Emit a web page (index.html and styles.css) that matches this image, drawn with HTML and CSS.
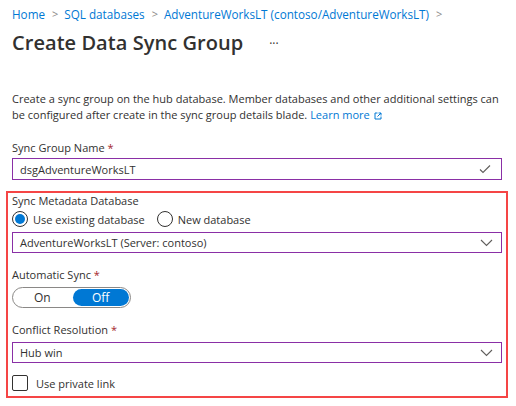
FILE: index.html
```html
<!DOCTYPE html>
<html>
<head>
<meta charset="utf-8">
<link rel="stylesheet" href="styles.css">
</head>
<body>
<div class="page">
  <nav class="crumbs">
    <a>Home</a><span class="sep">&gt;</span><a>SQL databases</a><span class="sep">&gt;</span><a>AdventureWorksLT (contoso/AdventureWorksLT)</a><span class="sep">&gt;</span>
  </nav>
  <div class="title-row">
    <h1>Create Data Sync Group</h1>
    <span class="more">···</span>
  </div>
  <p class="desc">
    <span class="line">Create a sync group on the hub database. Member databases and other additional settings can</span>
    <span class="line">be configured after create in the sync group details blade. <a class="link">Learn more <svg class="ext" width="8" height="8" viewBox="0 0 8 8"><path d="M3.5 1H1v6h6V4.5M4.5 1H7v2.5M7 1L3.5 4.5" fill="none" stroke="#0078d4" stroke-width="1"/></svg></a></span>
  </p>

  <div class="field">
    <div class="label">Sync Group Name <span class="req">*</span></div>
    <div class="input">
      <span>dsgAdventureWorksLT</span>
      <svg width="12" height="10" viewBox="0 0 12 10"><path d="M1 5.5l3 3 7-7" fill="none" stroke="#605e5c" stroke-width="1.1"/></svg>
    </div>
  </div>

  <section class="highlight">
    <div class="label">Sync Metadata Database</div>
    <div class="radios">
      <label class="radio"><span class="circle on"></span>Use existing database</label>
      <label class="radio"><span class="circle"></span>New database</label>
    </div>
    <div class="input dropdown">
      <span>AdventureWorksLT (Server: contoso)</span>
      <svg width="13" height="8" viewBox="0 0 13 8"><path d="M1 1l5.5 5.5L12 1" fill="none" stroke="#605e5c" stroke-width="1.1"/></svg>
    </div>

    <div class="label gap">Automatic Sync <span class="req">*</span></div>
    <div class="toggle">
      <span class="opt">On</span>
      <span class="opt active">Off</span>
    </div>

    <div class="label gap2">Conflict Resolution <span class="req">*</span></div>
    <div class="input dropdown">
      <span>Hub win</span>
      <svg width="13" height="8" viewBox="0 0 13 8"><path d="M1 1l5.5 5.5L12 1" fill="none" stroke="#605e5c" stroke-width="1.1"/></svg>
    </div>

    <label class="check"><span class="box"></span>Use private link</label>
  </section>
</div>
</body>
</html>
```

FILE: styles.css
```css
* { box-sizing: border-box; }
html, body { margin: 0; padding: 0; background: #fff; }
body {
  font-family: "Segoe UI", "Open Sans", "Noto Sans", sans-serif;
  font-size: 11px;
  color: #323130;
}
.page {
  width: 502px;
  padding: 6px 0 0 12px;
}
.crumbs {
  height: 16px;
  line-height: 16px;
  display: flex;
  align-items: center;
  white-space: nowrap;
  font-size: 11.7px;
}
.crumbs a { color: #0078d4; }
.crumbs .sep {
  color: #8a8886;
  margin: 0 6px 0 7px;
  font-size: 11px;
}
.title-row {
  display: flex;
  align-items: center;
  height: 30px;
  margin-top: 5px;
}
h1 {
  margin: 0;
  font-size: 20px;
  font-weight: 600;
  color: #323130;
  letter-spacing: 0.05px;
}
.more {
  margin-left: 26px;
  font-size: 12px;
  color: #323130;
  margin-top: 2px;
}
.desc {
  margin: 34px 0 0 0;
  line-height: 16px;
}
.desc .line { display: block; white-space: nowrap; }
.link { color: #0078d4; }
.ext { vertical-align: -1px; margin-left: 1px; }
.field { margin-top: 17px; }
.label {
  line-height: 16px;
  height: 16px;
}
.req { color: #a4262c; }
.input {
  margin-top: 2px;
  width: 490px;
  height: 22px;
  border: 1px solid #8a2fa6;
  display: flex;
  align-items: center;
  justify-content: space-between;
  padding: 0 10px 0 7px;
}
.highlight {
  margin: 11px 0 0 -6px;
  width: 502px;
  border: 2px solid #f54545;
  padding: 0 4px 5px 4px;
}
.radios {
  display: flex;
  align-items: center;
  height: 18px;
  margin-top: 1px;
}
.radio {
  display: flex;
  align-items: center;
  margin-right: 12px;
}
.circle {
  width: 16px;
  height: 16px;
  border: 1px solid #323130;
  border-radius: 50%;
  margin-right: 5px;
  display: flex;
  align-items: center;
  justify-content: center;
}
.circle.on::after {
  content: "";
  width: 10px;
  height: 10px;
  border-radius: 50%;
  background: #0078d4;
}
.highlight .dropdown { margin-top: 4px; height: 21px; }
.dropdown { padding-right: 8px; }
.gap { margin-top: 14px; }
.toggle {
  margin-top: 4px;
  width: 119px;
  height: 21px;
  border: 1px solid #8a8886;
  border-radius: 11px;
  display: flex;
  align-items: center;
  padding: 1px;
}
.opt {
  flex: 1;
  text-align: center;
  height: 17px;
  line-height: 17px;
  border-radius: 9px;
  font-size: 12px;
}
.opt:first-child { margin-right: 2px; }
.opt.active {
  background: #0078d4;
  color: #fff;
}
.gap2 { margin-top: 14px; }
.check {
  display: flex;
  align-items: center;
  margin-top: 12px;
  height: 16px;
}
.box {
  width: 16px;
  height: 16px;
  border: 1px solid #323130;
  border-radius: 2px;
  margin-right: 8px;
}
```
